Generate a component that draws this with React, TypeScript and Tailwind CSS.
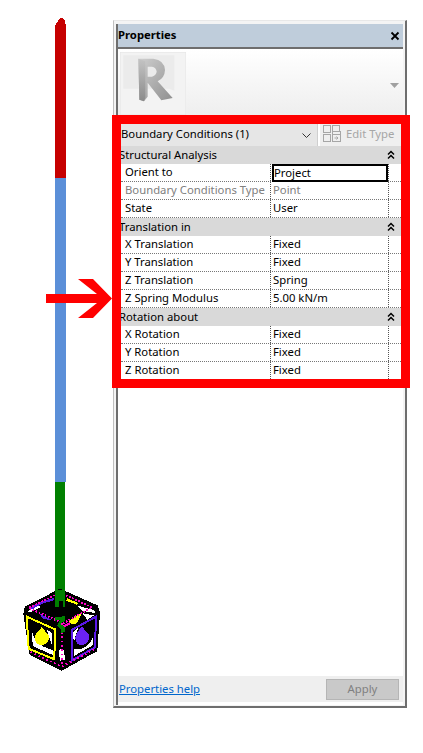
const font = { fontFamily: '"Noto Sans", "Open Sans", sans-serif' };

function Chevrons() {
  return (
    <svg width="8" height="10" viewBox="0 0 8 10" className="mr-[6px] -mt-[1px]">
      <path d="M1 4.5 L4 1.5 L7 4.5 M1 8.5 L4 5.5 L7 8.5" fill="none" stroke="#000" strokeWidth="1.5" />
    </svg>
  );
}

type RowData = { label: string; value: string; disabled?: boolean; selected?: boolean; last?: boolean };

function Row({ label, value, disabled, selected, last }: RowData) {
  return (
    <div className={`flex ${last ? "h-[17px]" : "h-[18px] border-b border-dotted border-[#777777]"} bg-white text-[11.3px] leading-[15px] ${disabled ? "text-[#808080]" : "text-black"}`}>
      <div className="w-[149px] shrink-0 pl-[4px] whitespace-nowrap">{label}</div>
      <div className="w-[118px] shrink-0 border-l border-dotted border-[#555555] pl-[2px]">
        {selected ? <div className="h-[18px] -ml-[1px] border-2 border-black leading-[13px]">{value}</div> : value}
      </div>
      <div className="flex-1 border-l border-dotted border-[#555555]" />
    </div>
  );
}

function Section({ title, rows }: { title: string; rows: RowData[] }) {
  return (
    <div className="flex flex-col">
      <div className="h-[18px] flex items-center justify-between bg-[#d9d9d9] text-[11.3px] leading-[15px] text-black">
        <span className="-ml-[2px] -mt-[1px]">{title}</span>
        <Chevrons />
      </div>
      {rows.map((r) => (
        <Row key={r.label} {...r} />
      ))}
    </div>
  );
}

function ModelView() {
  return (
    <svg width="113" height="700" viewBox="0 0 113 700" className="shrink-0">
      <g shapeRendering="crispEdges">
        <path d="M55 178 V27 L56 24 L58 21 L60 18 L63 18 L65 21 L66 26 V178 Z" fill="#c60000" />
        <rect x="55" y="178" width="11" height="304" fill="#5b8fd8" />
        <rect x="55" y="482" width="10" height="110" fill="#008000" />
      </g>
      <svg x="10" y="570" width="100" height="110" viewBox="0 0 300 330" shapeRendering="crispEdges">
        <polygon points="150,58 262,108 268,130 260,242 155,300 60,252 42,132 46,112" fill="#000" stroke="#000" strokeWidth="4" />
        {/* top face pieces */}
        <polygon points="52,124 88,106 92,112 60,128" fill="#ffffff" />
        <polygon points="60,112 100,92 132,84 130,92 100,100 66,118" fill="#5a18e8" />
        <polygon points="84,128 128,152 100,146" fill="#5a18e8" />
        <polygon points="172,84 205,100 200,104 168,92" fill="#ffff00" />
        <polygon points="200,106 250,120 258,130 215,122" fill="#ffffff" />
        <polygon points="176,152 218,126 200,160 185,164" fill="#ffff00" />
        <polygon points="218,130 252,136 232,150" fill="#ffffff" />
        {/* faces */}
        <polygon points="50,140 135,178 133,268 56,236" fill="#000" stroke="#ffff00" strokeWidth="6" />
        <polygon points="185,180 258,140 255,232 185,272" fill="#000" stroke="#5a18e8" strokeWidth="6" />
        <path d="M66 180 Q70 225 128 240 L128 255 L68 228 Z" fill="#ffffff" />
        <path d="M192 238 Q235 240 250 200 L248 226 L192 258 Z" fill="#ffffff" />
        <polygon points="110,178 126,190 126,225" fill="#ffffff" />
        <polygon points="188,190 205,170 192,215" fill="#ffffff" />
        <path d="M95 172 L116 195 Q120 222 96 226 Q74 224 74 202 Q78 188 95 172 Z" fill="#ffff00" />
        <path d="M216 170 L238 195 Q240 222 216 226 Q196 224 196 204 Q198 188 216 170 Z" fill="#6a22f4" />
        <polygon points="146,240 160,236 166,268 150,272" fill="#ffffff" />
        {/* magenta dots */}
        <polygon points="150,68 246,112 160,160 56,114" fill="none" stroke="#ff00c8" strokeWidth="6" strokeDasharray="5 5" />
        <path d="M155 160 V290 M62 246 L155 290 L256 236" fill="none" stroke="#ff00c8" strokeWidth="6" strokeDasharray="5 8" />
        <path d="M160 170 L180 160" fill="none" stroke="#ff00c8" strokeWidth="6" />
        {/* green */}
        <rect x="135" y="60" width="30" height="30" fill="#008000" />
        <polygon points="135,90 165,90 165,110 158,110 158,93 146,93 146,110 135,110" fill="#008000" />
        <polygon points="136,142 166,138 166,150 152,162 164,170 164,186 152,190 152,178 142,166 150,150 136,152" fill="#008000" />
      </svg>
    </svg>
  );
}

function RLogo() {
  return (
    <svg width="66" height="63" viewBox="12 12 198 189" className="shrink-0">
      <defs>
        <linearGradient id="rg" x1="0" y1="0" x2="1" y2="1">
          <stop offset="0" stopColor="#cfcfcf" />
          <stop offset="1" stopColor="#8f8f8f" />
        </linearGradient>
        <linearGradient id="rs" x1="0" y1="0" x2="0" y2="1">
          <stop offset="0" stopColor="#c4c4c4" />
          <stop offset="1" stopColor="#8a8a8a" />
        </linearGradient>
      </defs>
      <rect x="12" y="12" width="198" height="189" fill="#f3f3f3" stroke="#e4e4e4" strokeWidth="3" />
      <polygon points="22,22 175,22 175,128 160,122 22,122" fill="#ebebeb" />
      <path d="M67 32 H112 Q145 36 147 66 Q146 90 125 100 L170 150 L136 157 L95 104 V146 L84 160 L70 155 Z M95 56 V86 H108 Q122 82 122 70 Q120 58 108 56 Z" fill="url(#rg)" fillRule="evenodd" />
      <polygon points="67,32 88,40 88,150 84,160 70,155" fill="url(#rs)" />
    </svg>
  );
}

function EditTypeIcon() {
  return (
    <svg width="18" height="17" viewBox="0 0 18 17" fill="none" stroke="#a6a6a6" strokeWidth="1" className="shrink-0">
      <rect x="0.5" y="0.5" width="7" height="7" />
      <rect x="9.5" y="0.5" width="7" height="7" />
      <rect x="0.5" y="9.5" width="7" height="7" />
      <rect x="9.5" y="6.5" width="8" height="10" fill="#efefef" />
      <path d="M9.5 9.5 H17.5 M11.5 13 H15 M13.5 11.5 L15 13 L13.5 14.5" />
    </svg>
  );
}

export default function App() {
  return (
    <div className="relative flex w-[423px] h-[753px] bg-white overflow-hidden" style={font}>
      <ModelView />
      <div className="relative mt-[20px] w-[294px] h-[688px] flex flex-col border-r-2 border-b-2 border-l border-t border-[#6e6e6e] border-t-[#e8e8e8] border-l-[#c0c0c0] bg-[#f4f4f4] p-[1px]">
        <div className="flex flex-col flex-1 border-l-2 border-[#6e6e6e] mr-[1px] mt-[2px] ml-[1px]">
          <div className="h-[25px] shrink-0 flex items-center justify-between bg-[#bfcddb] border-b-2 border-[#6e6e6e] pr-[3px] text-[11.3px] font-bold">
            <span>Properties</span>
            <svg width="10" height="10" viewBox="0 0 10 10"><path d="M1.5 1.5 L8.5 8.5 M8.5 1.5 L1.5 8.5" stroke="#000" strokeWidth="1.8" /></svg>
          </div>
          <div className="flex-1 flex flex-col bg-white">
            <div className="h-[75px] shrink-0 flex items-start justify-between pl-[2px] pr-[3px] pt-[3px] bg-gradient-to-b from-white to-[#ececec]">
              <RLogo />
              <svg width="10" height="5" viewBox="0 0 10 5" className="mt-[31px]"><path d="M0 0 H9 L4.5 5 Z" fill="#a0a0a0" /></svg>
            </div>
            <div className="h-[22px] shrink-0 flex ml-[3px] mr-[2px]">
              <div className="w-[197px] flex items-center justify-between bg-[#e6e6e6] border-r border-[#cfcfcf] text-[11.3px] leading-[15px] pr-[6px]">
                <span className="-mt-[3px]">Boundary Conditions (1)</span>
                <svg width="9" height="5" viewBox="0 0 9 5"><path d="M0.5 0.5 L4.5 4.5 L8.5 0.5" fill="none" stroke="#333" /></svg>
              </div>
              <div className="flex-1 ml-[2px] flex items-center gap-[5px] bg-[#efefef] pl-[3px] pb-[3px] text-[11.3px] leading-[15px] text-[#a6a6a6] whitespace-nowrap">
                <EditTypeIcon />
                <span>Edit Type</span>
              </div>
            </div>
            <div className="flex flex-col ml-[3px] mr-[2px]">
              <Section title="Structural Analysis" rows={[
                { label: "Orient to", value: "Project", selected: true },
                { label: "Boundary Conditions Type", value: "Point", disabled: true },
                { label: "State", value: "User" },
              ]} />
              <Section title="Translation in" rows={[
                { label: "X Translation", value: "Fixed" },
                { label: "Y Translation", value: "Fixed" },
                { label: "Z Translation", value: "Spring" },
                { label: "Z Spring Modulus", value: "5.00 kN/m" },
              ]} />
              <Section title="Rotation about" rows={[
                { label: "X Rotation", value: "Fixed" },
                { label: "Y Rotation", value: "Fixed" },
                { label: "Z Rotation", value: "Fixed", last: true },
              ]} />
            </div>
            <div className="flex-1" />
            <div className="h-[26px] shrink-0 flex items-center justify-between bg-[#efefef] pl-[1px] pr-[4px] text-[11.3px]">
              <a className="text-[#0066cc] underline">Properties help</a>
              <div className="w-[73px] h-[21px] flex items-center justify-center bg-[#c9c9c9] border border-[#b5b5b5] text-[#808080]">Apply</div>
            </div>
            <div className="h-[3px] shrink-0 bg-white" />
          </div>
        </div>
        <div className="absolute left-[-2px] top-[94px] w-[298px] h-[273px] border-[9px] border-[#ff0000] pointer-events-none" />
      </div>
      <svg width="66" height="39" viewBox="0 0 66 39" className="absolute left-[46px] top-[279px]">
        <path d="M0 15 H51 L32 0 H47 L66 19.5 L47 39 H32 L51 24 H0 Z" fill="#ff0000" />
      </svg>
    </div>
  );
}
